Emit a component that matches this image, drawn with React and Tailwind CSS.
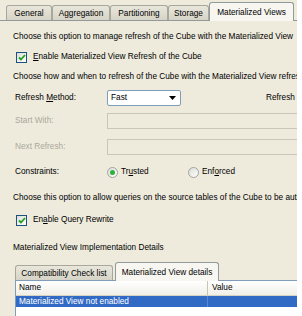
import React from 'react';

const font = { fontFamily: "'Liberation Sans', Arial, sans-serif" };

const Tab = ({ label, active, w }) =>
    active ? (
        <div className={`relative z-10 -mb-px flex h-[19px] ${w} shrink-0 items-start justify-center rounded-t-[3px] border border-b-0 border-[#919b9c] bg-[#f7f6f0] pt-[5px]`}>
            {label}
        </div>
    ) : (
        <div className={`flex h-[15px] ${w} shrink-0 items-center justify-center rounded-t-[3px] border border-b-0 border-[#a8a79c] bg-gradient-to-b from-[#e9e7dc] to-[#d6d3c6] pt-px`}>
            {label}
        </div>
    );

const Check = () => (
    <div className="flex h-[11px] w-[11px] shrink-0 items-center justify-center border border-[#1c5180] bg-gradient-to-br from-[#dcdcd7] to-white">
        <svg width="8" height="7" viewBox="0 0 8 7">
            <path d="M1 3.5 L3 5.5 L7 1" fill="none" stroke="#21a121" strokeWidth="1.8" />
        </svg>
    </div>
);

const Radio = ({ on }) => (
    <div className="flex h-[11px] w-[11px] shrink-0 items-center justify-center rounded-full border border-[#9fa3a0] bg-gradient-to-br from-[#dcdcd7] to-white">
        {on && <div className="h-[5px] w-[5px] rounded-full bg-[#2fb13a]" />}
    </div>
);

export default function App() {
    return (
        <div className="flex h-[316px] w-[302px] overflow-hidden bg-white text-[8.25px] leading-[10px] text-black" style={font}>
            <div className="flex h-full w-[297px] shrink-0 flex-col overflow-hidden bg-[#eeebdd] whitespace-nowrap">
                {/* Tab strip */}
                <div className="flex h-[21px] shrink-0 items-end border-b border-[#919b9c] pl-[6px]">
                    <Tab label="General" w="w-[46px]" />
                    <Tab label="Aggregation" w="w-[58px]" />
                    <Tab label="Partitioning" w="w-[58px]" />
                    <Tab label="Storage" w="w-[41px]" />
                    <Tab label="Materialized Views" w="w-[85px]" active />
                </div>

                <div className="flex flex-col pl-[13px]">
                    <div className="mt-[11px] h-[10px]">Choose this option to manage refresh of the Cube with the Materialized View</div>

                    <div className="mt-[9px] flex h-[12px] items-center gap-[6px] pl-[3px]">
                        <Check />
                        <span><u>E</u>nable Materialized View Refresh of the Cube</span>
                    </div>

                    <div className="mt-[9px] h-[10px]">Choose how and when to refresh of the Cube with the Materialized View refresh</div>

                    <div className="mt-[8px] flex h-[16px] items-center pl-[2px]">
                        <span className="w-[92px] shrink-0">Refresh <u>M</u>ethod:</span>
                        <div className="flex h-[16px] w-[74px] shrink-0 items-center rounded-[2px] border border-[#7f9db9] bg-white">
                            <span className="flex-1 pl-[3px]">Fast</span>
                            <div className="flex h-full w-[15px] items-center justify-center">
                                <svg width="7" height="4" viewBox="0 0 7 4">
                                    <path d="M0 0 H7 L3.5 4 Z" fill="#000" />
                                </svg>
                            </div>
                        </div>
                        <span className="ml-[85px] shrink-0">Refresh Interval:</span>
                    </div>

                    <div className="mt-[7px] flex h-[16px] items-center pl-[2px] text-[#aca899]">
                        <span className="w-[92px] shrink-0">Start With:</span>
                        <div className="h-[16px] w-[200px] shrink-0 border border-[#c9c7ba] bg-[#eeebdd]" />
                    </div>

                    <div className="mt-[10px] flex h-[16px] items-center pl-[2px] text-[#aca899]">
                        <span className="w-[92px] shrink-0">Next Refresh:</span>
                        <div className="h-[16px] w-[200px] shrink-0 border border-[#c9c7ba] bg-[#eeebdd]" />
                    </div>

                    <div className="mt-[11px] flex h-[12px] items-center pl-[2px]">
                        <span className="w-[92px] shrink-0">Constraints:</span>
                        <div className="flex w-[81px] shrink-0 items-center gap-[3px]">
                            <Radio on />
                            <span>Tr<u>u</u>sted</span>
                        </div>
                        <div className="flex items-center gap-[3px]">
                            <Radio />
                            <span>Enf<u>o</u>rced</span>
                        </div>
                    </div>

                    <div className="mt-[15px] h-[10px]">Choose this option to allow queries on the source tables of the Cube to be automatically rewritten</div>

                    <div className="mt-[11px] flex h-[12px] items-center gap-[6px] pl-[3px]">
                        <Check />
                        <span>En<u>a</u>ble Query Rewrite</span>
                    </div>

                    <div className="mt-[17px] h-[10px]">Materialized View Implementation Details</div>

                    {/* Inner tabs */}
                    <div className="mt-[9px] flex h-[18px] items-end pl-[2px]">
                        <Tab label="Compatibility Check list" w="w-[98px]" />
                        <div className="w-[2px] shrink-0" />
                        <Tab label="Materialized View details" w="w-[104px]" active />
                    </div>

                    {/* List view */}
                    <div className="ml-[2px] flex h-[40px] w-[300px] shrink-0 flex-col border border-[#7f9db9] bg-white">
                        <div className="flex h-[15px] shrink-0 border-b border-[#d6d2c2] bg-gradient-to-b from-white to-[#f0efe8]">
                            <div className="flex w-[192px] shrink-0 items-center border-r border-[#c7c5b2] pl-[3px]">Name</div>
                            <div className="flex items-center pl-[4px]">Value</div>
                        </div>
                        <div className="flex h-[11px] bg-[#316ac5] text-white">
                            <div className="flex w-[192px] shrink-0 items-center border-r border-[#5a87cf] pl-[3px]">Materialized View not enabled</div>
                            <div className="flex-1" />
                        </div>
                    </div>
                </div>
            </div>
        </div>
    );
}
